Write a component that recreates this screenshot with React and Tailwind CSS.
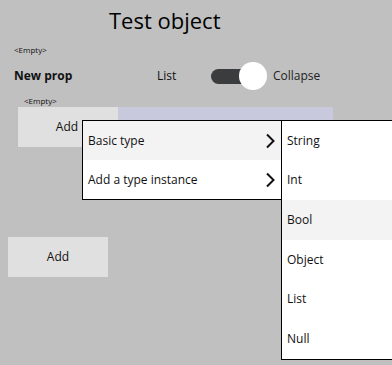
import React from "react";

const Chevron = () => (
  <svg width="10" height="16" viewBox="0 0 10 16" className="shrink-0">
    <polyline points="2,1.5 8.5,8 2,14.5" fill="none" stroke="#111" strokeWidth="2" />
  </svg>
);

export default function App() {
  const font = { fontFamily: '"Open Sans", "Noto Sans", sans-serif' };
  return (
    <div
      className="relative w-[392px] h-[365px] overflow-hidden bg-[#c0c0c0] text-[#111]"
      style={font}
    >
      <div className="pl-[109px] pt-[4px] h-[42px] text-[22px] leading-[32px] text-black">
        Test object
      </div>
      <div className="pl-[14px] pt-[2px] text-[8px] leading-[12px] h-[17px]">&lt;Empty&gt;</div>
      <div className="flex items-center h-[34px] pl-[14px]">
        <div className="w-[143px] font-bold text-[12px]">New prop</div>
        <div className="w-[54px] text-[12px]">List</div>
        <div className="relative w-[56px] h-[28px] flex items-center">
          <div className="w-[50px] h-[15px] rounded-full bg-[#3b3c3d]" />
          <div className="absolute left-[28px] top-[0px] w-[28px] h-[28px] rounded-full bg-white" />
        </div>
        <div className="pl-[6px] text-[12px] text-[#222]">Collapse</div>
      </div>
      <div className="pl-[24px] pt-[2px] text-[8px] leading-[12px] h-[14px]">&lt;Empty&gt;</div>
      <div className="flex ml-[18px]">
        <div className="w-[100px] h-[40px] bg-[#e0e0e0] flex items-center justify-center text-[12px] pr-[2px]">
          Add
        </div>
        <div className="w-[215px] h-[40px] bg-[#c9c9dd]" />
      </div>
      <div className="ml-[8px] mt-[90px] w-[100px] h-[40px] bg-[#e0e0e0] flex items-center justify-center text-[12px]">
        Add
      </div>

      <div className="absolute left-[82px] top-[120px] w-[200px] border border-black bg-white text-[12px]">
        <div className="h-[39px] flex items-center justify-between pl-[5px] pr-[6px] bg-[#f3f3f3]">
          <span>Basic type</span>
          <Chevron />
        </div>
        <div className="h-[39px] flex items-center justify-between pl-[5px] pr-[6px]">
          <span>Add a type instance</span>
          <Chevron />
        </div>
      </div>

      <div className="absolute left-[281px] top-[120px] w-[130px] border border-black bg-white text-[12px]">
        {["String", "Int", "Bool", "Object", "List", "Null"].map((t) => (
          <div
            key={t}
            className={
              "h-[39.67px] flex items-center pl-[5px] " +
              (t === "Bool" ? "bg-[#f3f3f3]" : "")
            }
          >
            {t}
          </div>
        ))}
      </div>
    </div>
  );
}
